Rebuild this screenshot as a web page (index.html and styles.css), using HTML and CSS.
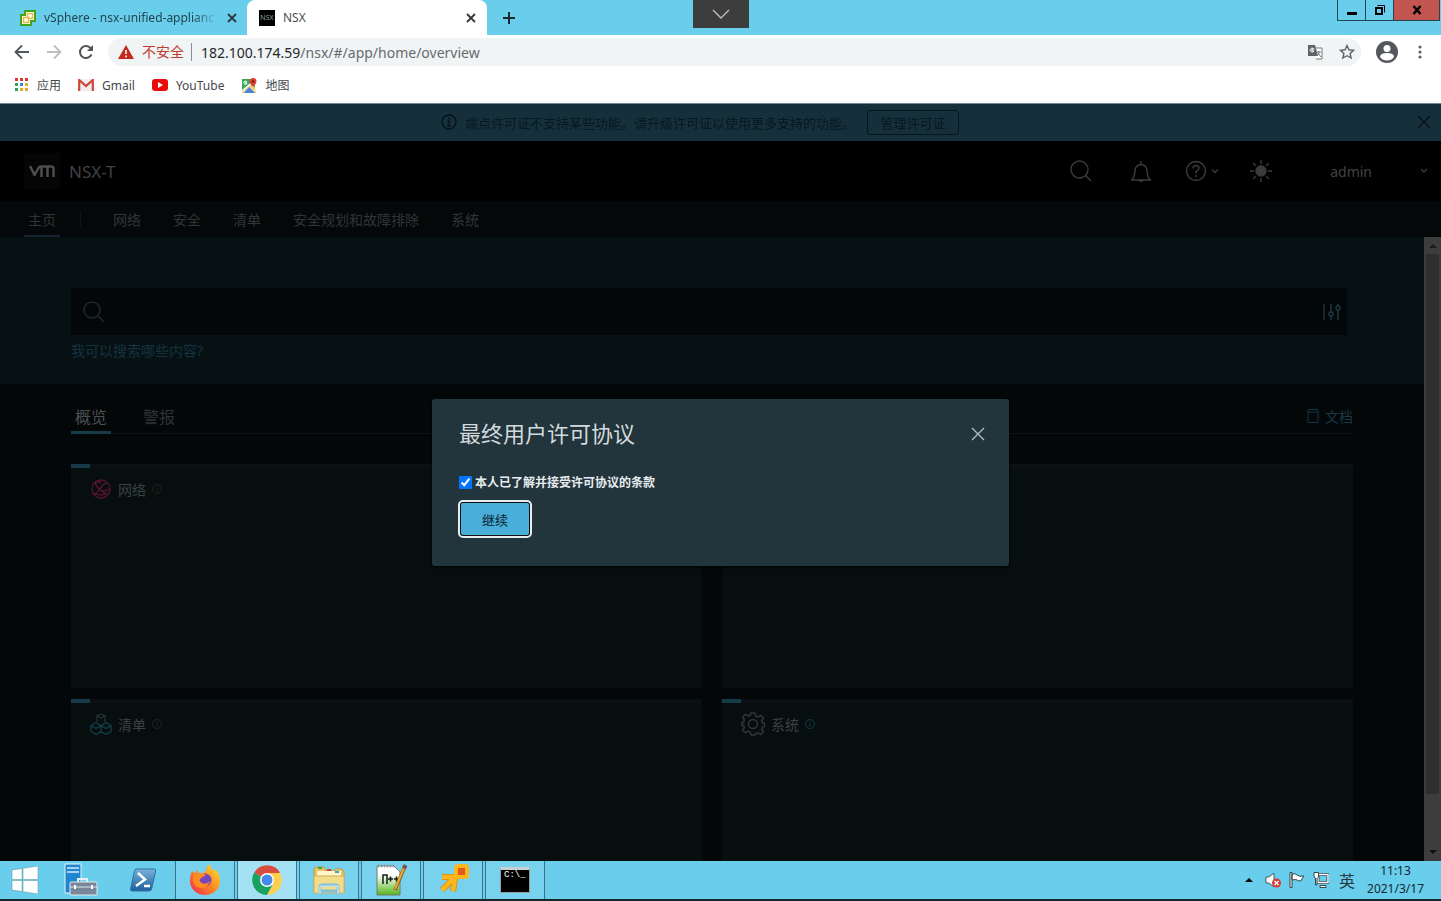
FILE: index.html
```
<!DOCTYPE html>
<html lang="zh-CN">
<head>
    <meta charset="UTF-8">
    <title>NSX</title>
    <link rel="stylesheet" href="styles.css">
</head>
<body>

    <!-- Browser tabs -->
    <div class="tab-strip">
        <div class="tab">
            <svg class="tab-icon" viewBox="0 0 16 16"><path d="M5 1h10v10h-4v4H1V5h4z" fill="#fff" stroke="#43a51c" stroke-width="2"/><path d="M7.500 3.500h5v5h-5z" fill="none" stroke="#e9b93d" stroke-width="1.500"/><path d="M3.500 7.500h5v5h-5z" fill="#fff" stroke="#e9b93d" stroke-width="1.500"/></svg>
            <span class="tab-title faded">vSphere - nsx-unified-applianc</span>
            <button class="tab-close" aria-label="Close tab"><svg viewBox="0 0 10 10"><path d="M1 1l8 8M9 1L1 9"/></svg></button>
        </div>
        <div class="tab active">
            <span class="nsx-icon">NSX</span>
            <span class="tab-title">NSX</span>
            <button class="tab-close" aria-label="Close tab"><svg viewBox="0 0 10 10"><path d="M1 1l8 8M9 1L1 9"/></svg></button>
        </div>
        <button class="new-tab" aria-label="New tab"><svg width="12" height="12" viewBox="0 0 12 12"><path d="M6 0v12M0 6h12" stroke="#1c2a30" stroke-width="2"/></svg></button>
        <div class="window-buttons">
            <button aria-label="Minimize"><svg width="12" height="12" viewBox="0 0 12 12"><path d="M1 8h10v3H1z"/></svg></button>
            <button aria-label="Restore"><svg width="12" height="12" viewBox="0 0 12 12" fill="none" stroke="#000"><path d="M2 4h6v6H2z" stroke-width="2"/><path d="M3.500 1.500h7v7"/></svg></button>
            <button class="close" aria-label="Close"><svg width="10" height="10" viewBox="0 0 10 10"><path d="M1.500 1l7 8M8.500 1l-7 8" stroke="#000" stroke-width="2.400"/></svg></button>
        </div>
    </div>
    <button class="console-handle" aria-label="Show console bar"><svg width="18" height="10" viewBox="0 0 18 10"><path d="M1 1l8 8 8-8" fill="none" stroke="#bdbdbd" stroke-width="1.400"/></svg></button>

    <!-- Address bar -->
    <div class="toolbar">
        <button aria-label="Back"><svg width="16" height="16" viewBox="0 0 16 16"><path d="M15 8H2M8 1.500L1.500 8 8 14.500" fill="none" stroke="#50555a" stroke-width="1.800"/></svg></button>
        <button aria-label="Forward"><svg width="16" height="16" viewBox="0 0 16 16"><path d="M1 8h13M8 1.500L14.500 8 8 14.500" fill="none" stroke="#bcbfc2" stroke-width="1.800"/></svg></button>
        <button aria-label="Reload"><svg width="16" height="16" viewBox="0 0 16 16"><path d="M13.500 10.500A6 6 0 1 1 13 4.700" fill="none" stroke="#50555a" stroke-width="2"/><path d="M15 1v6H9z" fill="#50555a"/></svg></button>
        <div class="address">
            <svg width="16" height="14" viewBox="0 0 16 14"><path d="M8 0l8 14H0z" fill="#c5291c"/><path d="M8 5v4M8 10.500v1.800" stroke="#fff" stroke-width="1.600"/></svg>
            <span class="unsafe">不安全</span>
            <span class="url"><span>182.100.174.59</span>/nsx/#/app/home/overview</span>
            <button aria-label="Translate"><svg width="16" height="16" viewBox="0 0 16 16"><path d="M7 4h8v11H9" fill="#fff" stroke="#777"/><path d="M1 1h7l3 11H1z" fill="#5f6368"/><path d="M7.500 5H5v2h2a2 2 0 1 1-.500-2.500" fill="none" stroke="#fff"/><path d="M10 8h4M12 7v1q0 3-2 4M11 9l3 4" fill="none" stroke="#777"/></svg></button>
            <button class="star" aria-label="Bookmark"><svg width="16" height="16" viewBox="0 0 16 16"><path d="M8 1.500l1.900 4.300 4.600.5-3.400 3.100 1 4.600L8 11.700 3.900 14l1-4.600L1.500 6.300l4.600-.5z" fill="none" stroke="#5f6368" stroke-width="1.400"/></svg></button>
        </div>
        <button class="profile" aria-label="Profile"><svg width="22" height="22" viewBox="0 0 22 22"><circle cx="11" cy="11" r="11" fill="#54585c"/><circle cx="11" cy="7.500" r="3.500" fill="#fff"/><path d="M4 16q0-4 7-4t7 4q-2.500 3.500-7 3.500T4 16z" fill="#fff"/></svg></button>
        <button class="menu" aria-label="Menu"><svg width="4" height="14" viewBox="0 0 4 14" fill="#5f6368"><circle cx="2" cy="2" r="1.600"/><circle cx="2" cy="7" r="1.600"/><circle cx="2" cy="12" r="1.600"/></svg></button>
    </div>

    <div class="bookmarks">
        <a href="#"><svg width="14" height="14" viewBox="0 0 14 14"><path d="M0 0h3v3H0zM5 0h3v3H5zM10 0h3v3h-3z" fill="#d93a30"/><path d="M0 5h3v3H0z" fill="#31a350"/><path d="M5 5h3v3H5z" fill="#3a7de0"/><path d="M10 5h3v3h-3zM5 10h3v3H5zM10 10h3v3h-3z" fill="#e5ab2c"/><path d="M0 10h3v3H0z" fill="#31a350"/></svg>应用</a>
        <a href="#"><svg width="16" height="12" viewBox="0 0 16 12"><path d="M2 0h12v12H2z" fill="#f0eeee"/><path d="M1.200 12V1L8 7l6.800-6v11" fill="none" stroke="#d0443a" stroke-width="2.200"/></svg>Gmail</a>
        <a href="#"><svg width="16" height="12" viewBox="0 0 16 12"><rect width="16" height="12" rx="3" fill="#e80c0c"/><path d="M6 3l5 3-5 3z" fill="#fff"/></svg>YouTube</a>
        <a href="#"><svg width="16" height="15" viewBox="0 0 16 15"><path d="M1 1h13v14H1z" fill="#3aa757"/><path d="M1 13L12 3l3 12H1z" fill="#ead47d"/><path d="M3 15l5-6 6 6z" fill="#4a80e8"/><path d="M1 13L14 2" stroke="#fff" stroke-width="1.500"/><path d="M12 9Q8.500 5.500 8.500 3.500a3.500 3.500 0 0 1 7 0Q15.500 5.500 12 9z" fill="#dc4437"/><circle cx="12" cy="3.500" r="1.300" fill="#7c1c16"/><path d="M6 4H4.500v1H6a1.600 1.600 0 1 1-.5-1.400" fill="none" stroke="#fff"/></svg>地图</a>
    </div>

    <!-- NSX page -->
    <div class="app">
        <div class="license-banner">
            <svg width="16" height="16" viewBox="0 0 16 16" fill="none" stroke="#06131a" stroke-width="1.400"><circle cx="8" cy="8" r="7"/><path d="M8 3.500v2M6.500 7H8v5M6 12h4"/></svg>
            <span>端点许可证不支持某些功能。请升级许可证以使用更多支持的功能。</span>
            <button class="manage">管理许可证</button>
            <button class="banner-close" aria-label="关闭"><svg width="14" height="14" viewBox="0 0 14 14"><path d="M1 1l12 12M13 1L1 13" stroke="#050f14" stroke-width="1.300"/></svg></button>
        </div>

        <header class="header">
            <span class="vm-logo"><svg width="26" height="12" viewBox="0 0 26 12" fill="none" stroke="#4d4d4f" stroke-width="2.500" stroke-linejoin="round"><path d="M1 1L5.500 10 9.800 2.500Q10.500 1.500 12 1.500h10.500q2 0 2 2V12M12.500 12V2M18.500 12V2"/></svg></span>
            <h1>NSX-T</h1>
            <div class="header-tools">
                <button aria-label="搜索"><svg width="22" height="22" viewBox="0 0 22 22"><circle cx="9.500" cy="9.500" r="8.500"/><path d="M16 16l5 5"/></svg></button>
                <button aria-label="警报"><svg width="22" height="22" viewBox="0 0 22 22"><path d="M1 20h20M2 19.500q3-3 3-9a6 6 0 0 1 12 0q0 6 3 9M11 4V1M9 21h4"/></svg></button>
                <button class="help" aria-label="帮助"><svg width="34" height="22" viewBox="0 0 34 22"><circle cx="11" cy="11" r="9.500"/><path d="M8 8.500q0-3 3-3t3 2.700q0 1.800-3 3.300v2M11 15v2M27 9.500l3 3 3-3"/></svg></button>
                <button aria-label="主题"><svg width="22" height="22" viewBox="0 0 22 22"><circle cx="11" cy="11" r="5" fill="#3c3c3d"/><path d="M11 0v4M11 18v4M0 11h4M18 11h4M3.200 3.200l2.600 2.600M16.200 16.200l2.600 2.600M3.200 18.800l2.600-2.600M16.200 5.800l2.600-2.600"/></svg></button>
                <button class="user">admin<svg width="8" height="6" viewBox="0 0 8 6"><path d="M1 1l3 3 3-3"/></svg></button>
            </div>
        </header>

        <nav class="nav">
            <a href="#" class="home">主页</a>
            <span class="divider"></span>
            <a href="#">网络</a>
            <a href="#">安全</a>
            <a href="#">清单</a>
            <a href="#">安全规划和故障排除</a>
            <a href="#">系统</a>
        </nav>

        <div class="scroll-area">
            <main>
                <section class="hero">
                    <div class="search">
                        <svg width="22" height="22" viewBox="0 0 22 22" fill="none" stroke="#1f2a2c" stroke-width="1.400"><circle cx="9" cy="9" r="8"/><path d="M15 15l6 6"/></svg>
                        <input type="text" aria-label="搜索">
                        <svg width="20" height="18" viewBox="0 0 20 18" fill="none" stroke="#1b3a48" stroke-width="1.400"><path d="M3 1v16" stroke="#18282a" stroke-width="2"/><path d="M10 1v8M10 13v4M17 1v2M17 7v10"/><circle cx="10" cy="11" r="2"/><circle cx="17" cy="5" r="2"/></svg>
                    </div>
                    <a href="#">我可以搜索哪些内容?</a>
                </section>
                <section class="content">
                    <div class="page-tabs">
                        <button class="selected">概览</button>
                        <button>警报</button>
                        <a href="#"><svg width="12" height="14" viewBox="0 0 12 14" fill="none" stroke="#153644"><path d="M1 .500h10v13H1zM1 3h10"/></svg>文档</a>
                    </div>
                    <div class="cards">
                        <article class="card">
                            <h2><svg width="22" height="22" viewBox="0 0 22 22" fill="none" stroke="#5c1230" stroke-width="1.300"><circle cx="11" cy="11" r="9"/><path d="M5 4q1 5 6 8 4 2 8-1M17 5q-5 1-7 6l-5 6M3 15q7 4 14 0M5 4h6M11 12l5 5"/></svg>网络
                            <svg class="info" viewBox="0 0 10 10"><circle cx="5" cy="5" r="4.500"/><path d="M5 2v1M5 4.500V8"/></svg></h2>
                        </article>
                        <article class="card"></article>
                        <article class="card">
                            <h2><svg width="22" height="22" viewBox="0 0 22 22" fill="none" stroke="#12404e" stroke-width="1.300"><path d="M7 9V3l4-2 4 2v6M7 3l4 2 4-2" stroke="#263437"/><path d="M6 9.500l5 3v6l-5 3-5-3v-6zM16 9.500l5 3v6l-5 3-5-3v-6zM1 12.500l5 3 5-3 5 3 5-3"/></svg>清单
                            <svg class="info" viewBox="0 0 10 10"><circle cx="5" cy="5" r="4.500"/><path d="M5 2v1M5 4.500V8"/></svg></h2>
                        </article>
                        <article class="card">
                            <h2><svg width="24" height="24" viewBox="0 0 24 24" fill="none" stroke="#303738" stroke-width="1.500"><path d="M10 1h4l.8 3.200 2 .9 2.900-1.800 2.700 2.700-1.800 2.900.9 2 2 .6v3l-2 .6-.8 2 1.700 2.800-2.800 2.700-2.800-1.700-2 .8L14 23h-4l-.8-3-2-.8-2.800 1.700-2.700-2.700 1.700-2.900-.8-2L1 13.500v-3l1.600-.6.8-2L1.700 5l2.700-2.700L7.300 4l1.900-.7z"/><circle cx="12" cy="12" r="4.500"/></svg>系统
                            <svg class="info blue" viewBox="0 0 10 10"><circle cx="5" cy="5" r="4.500"/><path d="M5 2v1M5 4.500V8"/></svg></h2>
                        </article>
                    </div>
                </section>
            </main>
            <div class="scrollbar">
                <svg width="8" height="17" viewBox="0 0 8 17"><path d="M0 11l4-4 4 4z" fill="#1b1b1b"/></svg>
                <div class="thumb"></div>
                <svg width="8" height="17" viewBox="0 0 8 17"><path d="M0 6l4 4 4-4z" fill="#111"/></svg>
            </div>
        </div>

        <div class="overlay">
            <div class="dialog" role="dialog" aria-labelledby="dialog-title">
                <div class="dialog-head">
                    <h2 id="dialog-title">最终用户许可协议</h2>
                    <button aria-label="关闭"><svg width="14" height="14" viewBox="0 0 14 14"><path d="M1 1l12 12M13 1L1 13" stroke="#b5bfc3" stroke-width="1.300"/></svg></button>
                </div>
                <div class="accept">
                    <input type="checkbox" id="accept" checked>
                    <label for="accept">本人已了解并接受许可协议的条款</label>
                </div>
                <button class="continue">继续</button>
            </div>
        </div>
    </div>

    <!-- Windows taskbar -->
    <footer class="taskbar">
        <button class="start" aria-label="Start"><svg width="28" height="28" viewBox="0 0 28 28" fill="#fff" stroke="#5b8ea3" stroke-width=".5"><path d="M1 4l10-1.500v11H1zM12 2.300L27 0v13.500H12zM1 14.500h10v11L1 24zM12 14.500h15V28l-15-2.300z"/></svg></button>
        <button class="task" aria-label="Server Manager"><svg width="34" height="34" viewBox="0 0 34 34"><path d="M1 1h16v29H1z" fill="#1f86cf" stroke="#e7f4fb"/><path d="M3 5h12M3 9h12" stroke="#d4ecfa" stroke-width="1.500"/><path d="M14 19v-3h9v3" fill="none" stroke="#e9eef1" stroke-width="2"/><rect x="6" y="19" width="27" height="13" rx="1" fill="#78889a" stroke="#e3e9ee"/><path d="M6 24h27" stroke="#dce3e8"/><path d="M11 22v4M28 22v4" stroke="#fff" stroke-width="2"/></svg></button>
        <button class="task" aria-label="PowerShell"><svg width="28" height="24" viewBox="0 0 28 24"><defs><linearGradient id="ps" x2="0" y2="1"><stop stop-color="#79b4dc"/><stop offset="1" stop-color="#1c5e9d"/></linearGradient></defs><path d="M7 1h18q2 0 1.600 2l-4 18q-.5 2-2.500 2H3q-2 0-1.500-2l4-18Q6 1 7 1z" fill="url(#ps)" stroke="#326f9e"/><path d="M9 5l7 6.500L7 18M15 18h6" fill="none" stroke="#fff" stroke-width="2.500"/></svg></button>
        <button class="task running" aria-label="Firefox"><svg width="32" height="32" viewBox="0 0 32 32"><defs><linearGradient id="ff" x1="1" x2="0" y2="1"><stop stop-color="#ffe62e"/><stop offset=".5" stop-color="#ff8a20"/><stop offset="1" stop-color="#f0205c"/></linearGradient></defs><path d="M3 7q1 2 3 2l2-3q1 3 4 4l5-3q0-4 3-7 2 5 5 7l1-2q5 5 5 12a15 14 0 0 1-30 0Q1 11 3 7z" fill="url(#ff)"/><circle cx="16" cy="16" r="6.500" fill="#7546bd"/><path d="M4 11q7-4 13 0l-5 3q-3 3 1 5 4 2 8-2-2 7-9 7-7-1-8-8z" fill="#ff8b22"/></svg></button>
        <button class="task running current" aria-label="Chrome"><svg width="30" height="30" viewBox="0 0 30 30"><path d="M15 15L2.200 7.500A15 15 0 0 1 28 7.500z" fill="#da4b40"/><path d="M15 15L2.200 7.500A15 15 0 0 0 15 30l5-9z" fill="#19a15f"/><path d="M15 8h13a15 15 0 0 1-13 22l6.500-11z" fill="#fcd04b"/><circle cx="15" cy="15" r="7" fill="#fff"/><circle cx="15" cy="15" r="5.500" fill="#4788ed"/></svg></button>
        <button class="task running" aria-label="Explorer"><svg width="34" height="32" viewBox="0 0 34 32"><path d="M2 6q0-3 3-3h7l2 4h8l1-2h7l2 3v20H2z" fill="#e8c761" stroke="#b89b4c"/><path d="M5 7h24v7H5z" fill="#fff5c5"/><path d="M2 12h30v17H2z" fill="#f3dd8b" stroke="#ceb05e"/><path d="M6 4h4" stroke="#36a852" stroke-width="2"/><path d="M15 6h4" stroke="#d9402f" stroke-width="2"/><path d="M23 8h4" stroke="#34a3dc" stroke-width="2"/><path d="M8 31V23q0-2 2-2h14q2 0 2 2v8M8 27h18" fill="none" stroke="#80bfda" stroke-width="3"/><path d="M8 30v-8h18v8" fill="none" stroke="#d8f2fb"/></svg></button>
        <button class="task running" aria-label="Notepad++"><svg width="32" height="32" viewBox="0 0 32 32"><defs><linearGradient id="np" x2="0" y2="1"><stop offset=".3" stop-color="#fff"/><stop offset="1" stop-color="#55b51c"/></linearGradient></defs><path d="M2 2h17l6 6v23H2z" fill="url(#np)" stroke="#727b72"/><path d="M3 2h18" stroke="#8c9692" stroke-width="3" stroke-dasharray="1 2"/><path d="M8 20v-9h4v9M13 15h5M15.500 12.500v5M19 15h5M21.500 12.500v5" fill="none" stroke="#151b12" stroke-width="1.500"/><path d="M30 2L20 26" stroke="#8b5b23" stroke-width="3.500"/><path d="M29 4l-9 21" stroke="#efaa30" stroke-width="2"/><path d="M30.500 1L29 4.500" stroke="#7d4a50" stroke-width="4"/></svg></button>
        <button class="task running" aria-label="VMware client"><svg width="32" height="32" viewBox="0 0 32 32"><path d="M5 13h13l4-4M20 11L5 26M18 14l-2 13" fill="none" stroke="#d58a0b" stroke-width="6" stroke-linejoin="round"/><path d="M5 13h13l4-4M20 11L5 26M18 14l-2 13" fill="none" stroke="#fdb71c" stroke-width="4.500" stroke-linejoin="round"/><rect x="19" y="2" width="11" height="11" rx="2" fill="#df5b1b" stroke="#fdb71c" stroke-width="4"/></svg></button>
        <button class="task running" aria-label="Command prompt"><span class="cmd">C:\_</span></button>

        <div class="tray">
            <svg width="8" height="4" viewBox="0 0 8 4"><path d="M0 4l4-4 4 4z"/></svg>
            <svg width="16" height="16" viewBox="0 0 16 16"><path d="M1 5h3l5-4v14l-5-4H1z" fill="#fff" stroke="#4b5b62"/><circle cx="11.500" cy="11" r="4.500" fill="#d83a34"/><path d="M9.500 9l4 4M13.500 9l-4 4" stroke="#fff" stroke-width="1.400"/></svg>
            <svg width="16" height="16" viewBox="0 0 16 16" fill="#fff" stroke="#33454d"><path d="M1 0.500h2v15H1zM3 2q3-1 5 1t7 1q-2 2-3 5-3 0-4-1T3 8z"/></svg>
            <svg width="16" height="16" viewBox="0 0 16 16" fill="none" stroke="#33454d"><path d="M5 2.500h10v8H5z" stroke-width="3"/><path d="M5 2.500h10v8H5z" stroke="#fff" stroke-width="1.400"/><path d="M1 .500h4.500V5L4 6.500V13H2.500V6L1 5z" fill="#fff"/><path d="M7 13.500h6v2H7z" fill="#fff"/></svg>
            <span class="ime">英</span>
            <div class="clock"><span>11:13</span><span>2021/3/17</span></div>
        </div>
    </footer>

</body>
</html>
```

FILE: styles.css
```
* {
    box-sizing: border-box;
}
body {
    display: flex;
    flex-direction: column;
    height: 100vh;
    margin: 0;
    overflow: hidden;
    background-color: #040809;
    font-family: "Noto Sans", "Noto Sans CJK SC", sans-serif;
    font-size: 12px;
}
button {
    display: flex;
    align-items: center;
    justify-content: center;
    padding: 0;
    border: none;
    background: none;
    font-family: inherit;
    cursor: pointer;
}
a {
    text-decoration: none;
}
svg {
    flex-shrink: 0;
}
h1, h2 {
    margin: 0;
    font-weight: normal;
}

/* Browser */
.tab-strip {
    display: flex;
    height: 35px;
    flex-shrink: 0;
    background-color: #68ceeb;
}
.tab {
    display: flex;
    align-items: center;
    gap: 8px;
    width: 247px;
    padding: 0 10px 0 20px;
    color: #24434f;
}
.tab.active {
    width: 240px;
    padding-left: 12px;
    padding-right: 11px;
    border-radius: 8px 8px 0 0;
    background-color: #fff;
    color: #4c5054;
}
.tab-icon {
    width: 16px;
    height: 16px;
}
.nsx-icon {
    width: 16px;
    height: 16px;
    background-color: #000;
    color: #8aa39a;
    font-size: 7px;
    line-height: 16px;
    text-align: center;
}
.tab-title {
    flex: 1;
    white-space: nowrap;
}
.faded {
    -webkit-mask-image: linear-gradient(to right, #000 85%, transparent);
    mask-image: linear-gradient(to right, #000 85%, transparent);
}
.tab-close svg {
    width: 10px;
    height: 10px;
    stroke: #30363a;
    stroke-width: 1.800;
}
.new-tab {
    width: 44px;
}
.window-buttons {
    display: flex;
    height: 21px;
    margin: 0 1px 0 auto;
    border: 1px solid #26464f;
    border-top: none;
}
.window-buttons button {
    width: 28px;
    border-right: 1px solid #26464f;
}
.window-buttons .close {
    width: 45px;
    border: none;
    background-color: #c2554f;
}
.console-handle {
    position: absolute;
    top: 0;
    left: 50%;
    width: 56px;
    height: 28px;
    margin-left: -28px;
    background-color: #3d3d3d;
}
.toolbar {
    display: flex;
    align-items: center;
    height: 34px;
    flex-shrink: 0;
    padding: 0 16px 0 14px;
    gap: 16px;
    background-color: #fff;
}
.address {
    display: flex;
    flex: 1;
    align-items: center;
    height: 28px;
    margin-left: -2px;
    padding: 0 6px 0 10px;
    border-radius: 14px;
    background-color: #f1f4f4;
    font-size: 14px;
}
.unsafe {
    margin: 0 9px 0 8px;
    padding-right: 7px;
    border-right: 1px solid #8b8f92;
    color: #c0392b;
    line-height: 18px;
}
.url {
    flex: 1;
    color: #666b70;
}
.url span {
    color: #24282b;
}
.address .star {
    margin-left: 16px;
}
.profile {
    margin-left: -1px;
}
.menu {
    width: 12px;
    margin-right: -1px;
}
.bookmarks {
    display: flex;
    align-items: center;
    gap: 17px;
    height: 35px;
    flex-shrink: 0;
    padding: 0 15px 2px;
    border-bottom: 1px solid #6f8790;
    background-color: #fff;
}
.bookmarks a {
    display: flex;
    align-items: center;
    gap: 8px;
    color: #44484c;
}

/* NSX */
.app {
    position: relative;
    display: flex;
    flex: 1;
    flex-direction: column;
    min-height: 0;
}
.license-banner {
    display: flex;
    align-items: center;
    justify-content: center;
    height: 37px;
    flex-shrink: 0;
    padding: 0 10px 1px 7px;
    background-color: #16303b;
    color: #071821;
    gap: 8px;
}
.license-banner svg:first-child {
    margin-left: auto;
}
.license-banner span {
    font-size: 13px;
}
.manage {
    width: 92px;
    height: 25px;
    margin: 0 16px 0 4px;
    border: 1px solid #07151c;
    border-radius: 3px;
    color: #071821;
    font-size: 13px;
}
.banner-close {
    margin-left: auto;
}
.header {
    display: flex;
    align-items: center;
    height: 60px;
    flex-shrink: 0;
    padding: 0 13px 0 24px;
    background-color: #000;
    color: #434344;
}
.vm-logo {
    display: flex;
    align-items: center;
    justify-content: center;
    width: 36px;
    height: 36px;
    background-color: #050506;
}
.header h1 {
    margin-left: 9px;
    font-size: 17px;
}
.header-tools {
    display: flex;
    align-items: center;
    margin-left: auto;
}
.header-tools button {
    margin-right: 38px;
    color: #434344;
    font-size: 14px;
}
.header-tools .help {
    margin: 0 31px 0 -5px;
}
.header-tools svg {
    fill: none;
    stroke: #3c3c3d;
    stroke-width: 1.400;
}
.header-tools .user {
    gap: 48px;
    margin: 0 0 0 20px;
}
.nav {
    display: flex;
    align-items: center;
    gap: 32px;
    height: 36px;
    flex-shrink: 0;
    padding: 0 24px;
    background-color: #040809;
    font-size: 14px;
}
.nav a {
    color: #303536;
}
.nav .home {
    height: 36px;
    margin-right: -12px;
    padding: 0 4px;
    border-bottom: 2px solid #172630;
    line-height: 38px;
}
.divider {
    width: 1px;
    height: 16px;
    background-color: #0d1415;
}
.scroll-area {
    display: flex;
    flex: 1;
    min-height: 0;
}
main {
    display: flex;
    flex: 1;
    flex-direction: column;
    min-width: 0;
}
.hero {
    height: 147px;
    flex-shrink: 0;
    padding: 51px 77px 0 71px;
    background-color: #071113;
}
.search {
    display: flex;
    align-items: center;
    height: 47px;
    padding: 0 6px 0 12px;
    background-color: #030708;
}
.search input {
    flex: 1;
    height: 40px;
    border: none;
    outline: none;
    background: none;
    color: #303536;
}
.hero a {
    display: block;
    margin-top: 6px;
    color: #143341;
    font-size: 14px;
    line-height: 20px;
}
.content {
    display: flex;
    flex: 1;
    flex-direction: column;
    padding: 14px 71px 0;
    background-color: #030708;
}
.page-tabs {
    display: flex;
    height: 36px;
    gap: 28px;
    border-bottom: 1px solid #0e1415;
}
.page-tabs button {
    height: 36px;
    padding: 2px 4px 0;
    border-bottom: 3px solid transparent;
    color: #2d3334;
    font-size: 16px;
}
.page-tabs .selected {
    border-color: #173a48;
    color: #4a5152;
}
.page-tabs a {
    display: flex;
    align-items: center;
    gap: 6px;
    margin-left: auto;
    color: #173a48;
    font-size: 14px;
}
.cards {
    display: grid;
    flex: 1;
    grid-template-columns: 1fr 1fr;
    grid-template-rows: 224px 1fr;
    gap: 11px 20px;
    margin-top: 30px;
}
.card {
    border-top: 4px solid;
    border-image: linear-gradient(to right, #173a48 23px, #0b1112 23px) 4;
    background-color: #060e0e;
}
.card h2 {
    display: flex;
    align-items: center;
    gap: 6px;
    height: 24px;
    margin: 9px 19px;
    color: #3a4243;
    font-size: 14px;
}
.info {
    width: 10px;
    height: 10px;
    fill: none;
    stroke: #1c2829;
}
.info.blue {
    stroke: #143744;
}
.scrollbar {
    display: flex;
    flex-direction: column;
    align-items: center;
    width: 17px;
    background-color: #3d3d3d;
}
.thumb {
    width: 13px;
    height: 540px;
    margin-bottom: auto;
    background-color: #2f2f2f;
}

/* License dialog */
.overlay {
    position: absolute;
    inset: 0;
    display: flex;
    align-items: center;
    justify-content: center;
}
.dialog {
    width: 577px;
    padding: 19px 24px 29px 27px;
    border-radius: 3px;
    background-color: #22343c;
    box-shadow: 0 1px 3px #000;
}
.dialog-head {
    display: flex;
    align-items: center;
    justify-content: space-between;
    height: 32px;
    color: #d3dadd;
}
.dialog-head h2 {
    line-height: 32px;
    padding-bottom: 2px;
    font-size: 22px;
}
.dialog-head button {
    width: 14px;
}
.accept {
    display: flex;
    align-items: center;
    gap: 3px;
    height: 18px;
    margin: 23px 0 10px;
    color: #e6ebed;
    font-weight: bold;
}
.accept input {
    width: 13px;
    height: 13px;
    margin: 0;
}
.continue {
    width: 72px;
    height: 36px;
    border: 2px solid #101010;
    border-radius: 4px;
    outline: 2px solid #e9eced;
    outline-offset: -1px;
    background-color: #49afd9;
    color: #08222e;
    font-size: 13px;
}

/* Taskbar */
.taskbar {
    display: flex;
    height: 40px;
    flex-shrink: 0;
    border-bottom: 2px solid #16262c;
    background-color: #68ceeb;
}
.start {
    width: 50px;
}
.task {
    width: 62px;
}
.running {
    width: 60px;
    margin: 0 1px;
    border: 1px solid #3c7386;
    border-width: 0 1px;
    background-color: #79d2ed;
}
.current {
    background-color: #a5e1f4;
}
.cmd {
    width: 30px;
    height: 26px;
    padding-left: 3px;
    border: 1px solid #939da1;
    border-top: 3px solid #c7d0d3;
    background-color: #000;
    color: #fff;
    font-family: "Liberation Mono", monospace;
    font-size: 9px;
    text-align: left;
}
.tray {
    display: flex;
    align-items: center;
    gap: 8px;
    margin-left: auto;
    padding-right: 17px;
}
.tray svg:first-child {
    margin-right: 4px;
}
.ime {
    margin: 0 4px 0 2px;
    color: #26373e;
    font-size: 16px;
}
.clock {
    display: flex;
    flex-direction: column;
    align-items: center;
    color: #15282f;
    line-height: 18px;
}
```
